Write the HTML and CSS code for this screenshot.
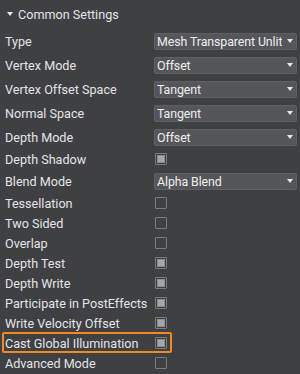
FILE: index.html
```html
<!DOCTYPE html>
<html lang="en">
<head>
  <meta charset="UTF-8" />
  <title>Common Settings</title>
  <link rel="stylesheet" href="styles.css">
</head>
<body>
  <div class="panel">
    <div class="section-head">
      <span class="caret"></span>
      <span>Common Settings</span>
    </div>

    <div class="row tall">
      <div class="label">Type</div>
      <div class="value"><div class="select"><span>Mesh Transparent Unlit</span><i class="arrow"></i></div></div>
    </div>
    <div class="row tall">
      <div class="label">Vertex Mode</div>
      <div class="value"><div class="select"><span>Offset</span><i class="arrow"></i></div></div>
    </div>
    <div class="row tall">
      <div class="label">Vertex Offset Space</div>
      <div class="value"><div class="select"><span>Tangent</span><i class="arrow"></i></div></div>
    </div>
    <div class="row tall">
      <div class="label">Normal Space</div>
      <div class="value"><div class="select"><span>Tangent</span><i class="arrow"></i></div></div>
    </div>
    <div class="row tall">
      <div class="label">Depth Mode</div>
      <div class="value"><div class="select"><span>Offset</span><i class="arrow"></i></div></div>
    </div>
    <div class="row">
      <div class="label">Depth Shadow</div>
      <div class="value"><span class="check on"></span></div>
    </div>
    <div class="row tall">
      <div class="label">Blend Mode</div>
      <div class="value"><div class="select"><span>Alpha Blend</span><i class="arrow"></i></div></div>
    </div>
    <div class="row">
      <div class="label">Tessellation</div>
      <div class="value"><span class="check"></span></div>
    </div>
    <div class="row">
      <div class="label">Two Sided</div>
      <div class="value"><span class="check"></span></div>
    </div>
    <div class="row">
      <div class="label">Overlap</div>
      <div class="value"><span class="check"></span></div>
    </div>
    <div class="row">
      <div class="label">Depth Test</div>
      <div class="value"><span class="check on"></span></div>
    </div>
    <div class="row">
      <div class="label">Depth Write</div>
      <div class="value"><span class="check on"></span></div>
    </div>
    <div class="row">
      <div class="label">Participate in PostEffects</div>
      <div class="value"><span class="check on"></span></div>
    </div>
    <div class="row">
      <div class="label">Write Velocity Offset</div>
      <div class="value"><span class="check on"></span></div>
    </div>
    <div class="row">
      <div class="label">Cast Global Illumination</div>
      <div class="value"><span class="check on"></span></div>
      <div class="highlight"></div>
    </div>
    <div class="row">
      <div class="label">Advanced Mode</div>
      <div class="value"><span class="check"></span></div>
    </div>
  </div>
</body>
</html>
```

FILE: styles.css
```css
html, body {
  margin: 0;
  padding: 0;
  background: #3f4044;
}
body {
  font-family: Roboto, "Liberation Sans", sans-serif;
  font-size: 12.6px;
  color: #e4e4e4;
}
.panel {
  width: 300px;
  height: 374px;
  overflow: hidden;
}
.section-head {
  height: 29px;
  display: flex;
  align-items: center;
  gap: 5px;
  padding-left: 7px;
  padding-bottom: 1px;
  box-sizing: border-box;
  color: #e4e4e4;
}
.caret {
  width: 0;
  height: 0;
  border-left: 3.5px solid transparent;
  border-right: 3.5px solid transparent;
  border-top: 4px solid #e8e8e8;
}
.row {
  position: relative;
  display: flex;
  align-items: center;
  height: 20px;
}
.row.tall {
  height: 24px;
}
.label {
  flex: none;
  width: 154px;
  padding-left: 5px;
  box-sizing: border-box;
  white-space: nowrap;
}
.value {
  flex: 1;
  min-width: 0;
  padding-right: 3px;
  display: flex;
  align-items: center;
}
.select {
  flex: 1;
  min-width: 0;
  height: 17px;
  display: flex;
  align-items: center;
  justify-content: space-between;
  padding: 0 3px 0 2px;
  background: #55565a;
  border: 1px solid #5f6064;
  border-radius: 2px;
  box-sizing: border-box;
  color: #eeeeee;
  font-size: 12.4px;
  letter-spacing: -0.1px;
  white-space: nowrap;
}
.select span {
  overflow: hidden;
}
.arrow {
  flex: none;
  width: 0;
  height: 0;
  border-left: 3.5px solid transparent;
  border-right: 3.5px solid transparent;
  border-top: 4px solid #e8e8e8;
  margin-left: 3px;
}
.check {
  width: 12px;
  height: 12px;
  margin-left: 1px;
  box-sizing: border-box;
  border: 1px solid #7a7b7e;
  border-radius: 1px;
  display: flex;
  align-items: center;
  justify-content: center;
}
.check.on::after {
  content: "";
  width: 6px;
  height: 6px;
  background: #a6a6a8;
  border: 1px solid #8c8d90;
}
.highlight {
  position: absolute;
  left: 2px;
  top: -1px;
  width: 170px;
  height: 21px;
  box-sizing: border-box;
  border: 2px solid #f28a1e;
  border-radius: 2px;
}
```
